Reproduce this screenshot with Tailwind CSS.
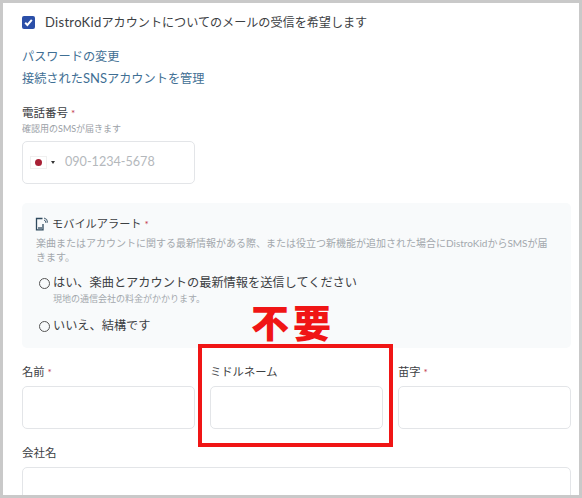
<!DOCTYPE html>
<html lang="ja">
  <head>
    <meta charset="UTF-8" />
    <meta name="viewport" content="width=device-width, initial-scale=1.0" />
    <title>Account settings</title>
    <script src="https://cdn.jsdelivr.net/npm/@tailwindcss/browser@4"></script>
  </head>
  <body class="bg-white">
    <div class="relative w-[582px] h-[498px] overflow-hidden border-[3px] border-[#c9c9c9] bg-white text-[#3c4043] font-['Lato','Noto_Sans_CJK_JP',sans-serif]">
      <div class="pl-[19px] pr-[8px] pt-[13px]">
        <!-- mail opt in -->
        <div class="flex items-center h-[13px] gap-[10px]">
          <div class="flex items-center justify-center w-[13px] h-[13px] rounded-[2px] bg-[#2b4fa8]">
            <svg width="11" height="11" viewBox="0 0 11 11" fill="none">
              <path d="M2.2 5.8 L4.4 8 L8.8 2.8" stroke="white" stroke-width="2" />
            </svg>
          </div>
          <p class="text-[12.1px] leading-[13px] whitespace-nowrap"><span class="text-[13px] tracking-[0.3px]">DistroKid</span>アカウントについてのメールの受信を希望します</p>
        </div>

        <a class="block mt-[19px] text-[12.2px] leading-[18px] text-[#3f6f94]">パスワードの変更</a>
        <a class="block mt-[3px] text-[12.2px] leading-[18px] text-[#3f6f94]">接続された<span class="text-[13px]">SNS</span>アカウントを管理</a>

        <!-- phone -->
        <p class="mt-[16px] text-[11.5px] leading-[18px]">電話番号 <span class="text-[10px] text-[#c0354a]">*</span></p>
        <p class="text-[9px] leading-[14px] text-[#9aa0a6]">確認用のSMSが届きます</p>
        <div class="flex items-center mt-[5px] w-[173px] h-[43px] pl-[7px] rounded-[5px] border border-[#e3e5e8]">
          <div class="flex items-center justify-center w-[17px] h-[13px] bg-white border border-[#f0f0f0]">
            <div class="w-[7px] h-[7px] rounded-full bg-[#a82035]"></div>
          </div>
          <div class="ml-[4px] w-0 h-0 border-x-[2.5px] border-x-transparent border-t-[3px] border-t-[#333]"></div>
          <span class="ml-[10px] text-[12.6px] text-[#b4b8bc]">090-1234-5678</span>
        </div>

        <!-- mobile alert panel -->
        <div class="mt-[19px] h-[145px] w-[549px] rounded-[5px] bg-[#f8fafb] pl-[14px] pt-[13px]">
          <div class="flex items-center h-[16px]">
            <svg class="-ml-[1px]" width="13" height="14" viewBox="0 0 13 14" fill="none">
              <path d="M7.5 1.5 H1.5 V12.8 H8 V7" stroke="#2f4a5e" stroke-width="1.3" />
              <path d="M3 11 H7" stroke="#2f4a5e" stroke-width="1.3" />
              <path d="M9 3 Q11 3.5 11 6 M9 1 Q12.6 1.6 12.6 5.6" stroke="#2f4a5e" stroke-width="0.9" />
            </svg>
            <p class="ml-[4px] text-[11.2px] leading-[16px]">モバイルアラート <span class="text-[10px] text-[#c0354a]">*</span></p>
          </div>
          <p class="mt-[5px] w-[516px] text-[10px] leading-[13.5px] text-[#a3a8ad]">楽曲またはアカウントに関する最新情報がある際、または役立つ新機能が追加された場合にDistroKidからSMSが届きます。</p>

          <div class="flex items-center mt-[10px] ml-[3px] h-[18px]">
            <div class="w-[11px] h-[11px] rounded-full border border-[#555]"></div>
            <p class="ml-[3px] text-[12.2px] leading-[18px] whitespace-nowrap">はい、楽曲とアカウントの最新情報を送信してください</p>
          </div>
          <p class="ml-[17px] text-[9px] leading-[14px] text-[#a3a8ad]">現地の通信会社の料金がかかります。</p>
          <div class="flex items-center mt-[11px] ml-[3px] h-[18px]">
            <div class="w-[11px] h-[11px] rounded-full border border-[#555]"></div>
            <p class="ml-[3px] text-[12.2px] leading-[18px] whitespace-nowrap">いいえ、結構です</p>
          </div>
        </div>

        <!-- name fields -->
        <div class="grid grid-cols-3 gap-x-[15px] w-[549px] mt-[15px]">
          <div>
            <p class="text-[11.3px] leading-[18px]">名前 <span class="text-[10px] text-[#c0354a]">*</span></p>
            <div class="mt-[5px] h-[43px] rounded-[5px] border border-[#e3e5e8]"></div>
          </div>
          <div>
            <p class="text-[11.3px] leading-[18px]">ミドルネーム</p>
            <div class="mt-[5px] h-[43px] rounded-[5px] border border-[#e3e5e8]"></div>
          </div>
          <div>
            <p class="text-[11.3px] leading-[18px]">苗字 <span class="text-[10px] text-[#c0354a]">*</span></p>
            <div class="mt-[5px] h-[43px] rounded-[5px] border border-[#e3e5e8]"></div>
          </div>
        </div>

        <p class="mt-[15px] text-[11.5px] leading-[18px]">会社名</p>
        <div class="mt-[5px] w-[549px] h-[44px] rounded-[5px] border border-[#e3e5e8]"></div>
      </div>

      <!-- annotation over the form -->
      <p class="absolute left-[248px] top-[297px] text-[38px] leading-[44px] tracking-[4px] font-black text-[#f01515] whitespace-nowrap">不要</p>
      <div class="absolute left-[195px] top-[341px] w-[195px] h-[103px] border-[4px] border-[#f01515]"></div>
    </div>
  </body>
</html>
